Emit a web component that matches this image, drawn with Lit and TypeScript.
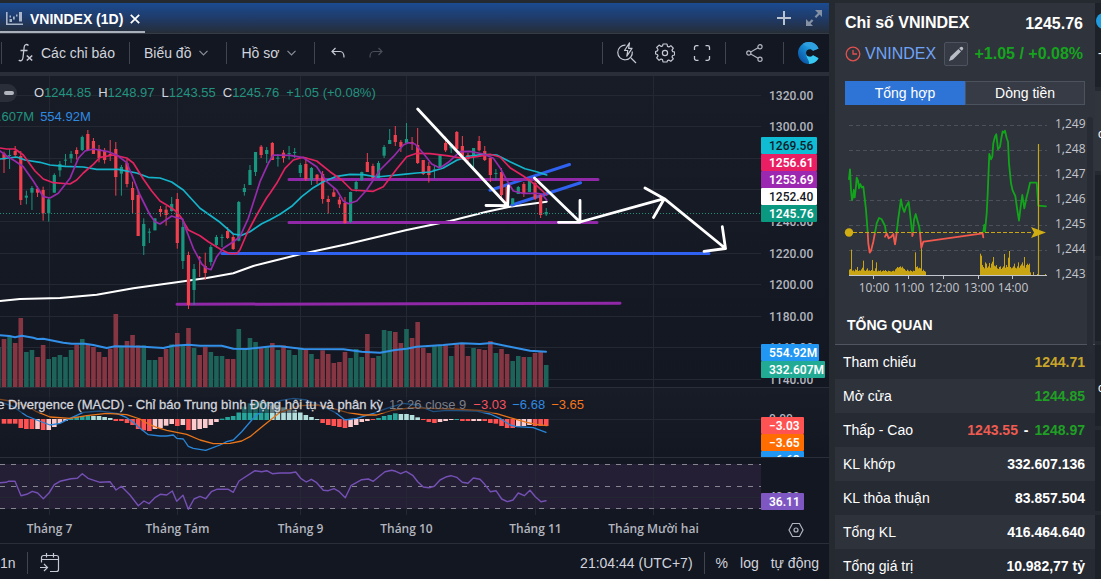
import { LitElement, html, svg, css } from "lit";
import { customElement, state } from "lit/decorators.js";

const STEP = 5.59;
const barX = (i: number) => 4 + STEP * i;

// Traces are stored at three units per pixel, relative to an origin.
type Trace = { x: number; y: number; pts: string };
const toPoints = (traces: Trace[]) =>
  traces
    .map((t) =>
      t.pts
        .split(" ")
        .map((p) => {
          const [a, b] = p.split(",").map(Number);
          return `${(t.x + a / 3).toFixed(1)},${(t.y + b / 3).toFixed(1)}`;
        })
        .join(" ")
    )
    .join(" ");
const line = (traces: Trace[], color: string, width: number) =>
  svg`<polyline points=${toPoints(traces)} fill="none" stroke=${color} stroke-width=${width} stroke-linejoin="round" stroke-linecap="round"></polyline>`;

// high, open/close top, open/close bottom, low
const CANDLES =
  "r230,235,254,294 g222,240,243,282 r213,228,240,247 r228,243,375,390 g347,362,368,388 g333,339,353,405 r333,341,353,366 r335,345,415,437 g369,373,415,440 g295,300,353,353 g258,267,286,305 g237,254,257,272 g228,237,250,264 r217,225,237,254 g182,186,225,228 r165,177,225,225 r189,198,237,237 r210,222,249,262 r219,228,255,266 r195,237,243,258 r201,222,306,362 g270,276,296,362 r252,264,327,337 r320,339,375,416 r345,360,483,483 g430,447,513,540 g460,470,473,504 g430,430,466,466 r393,402,411,425 r393,404,420,452 g366,387,408,410 r354,372,504,521 g436,456,558,582 r530,540,690,702 g567,582,645,690 r543,547,549,606 r533,573,594,615 g510,516,561,572 g480,486,510,518 g478,486,489,516 r456,468,489,492 r477,486,522,525 g378,381,497,499 g327,339,351,362 g270,285,330,330 g231,231,291,303 r210,215,240,249 g216,225,237,264 r201,204,255,255 g237,248,251,275 r225,233,249,263 g213,234,237,254 g219,231,234,249 g264,270,294,306 r246,267,312,318 g276,279,315,330 r297,299,313,327 r288,297,372,386 r362,372,381,416 r340,352,365,366 r365,374,388,399 r366,384,444,446 g350,351,441,444 g318,321,342,350 g290,291,315,318 r234,261,291,291 r266,273,309,312 g258,264,309,310 g210,216,242,249 g162,195,207,207 r153,180,201,213 r195,201,216,231 g144,192,204,204 r186,201,207,225 r159,210,264,267 r255,255,297,300 r261,273,300,323 g270,283,286,311 g237,240,276,279 r185,204,226,231 g205,207,220,234 r168,171,222,224 r183,213,243,255 r234,240,252,264 g219,219,246,282 r183,198,226,229 r213,228,255,258 r249,249,300,321 g282,294,297,315 r279,291,360,369 r331,336,390,396 g369,370,387,390 g333,336,357,357 r321,327,354,366 g312,315,351,351 r318,324,371,375 r357,360,420,429 g399,411,418,423".split(" ");

const VOLUMES =
  "g126 r102 g93 r114 r39 g141 g135 r156 r120 g162 g156 g150 g156 g135 r120 g102 r120 r126 r141 r156 r131 r27 g124 r108 r90 r121 g121 g165 g165 r156 r132 g118 r84 g121 r69 g129 r150 r126 g141 g153 g153 r162 r162 g72 g129 g99 g111 r128 g126 r114 g135 r121 g135 g150 g132 r135 g147 r162 r136 r147 r174 r171 r141 g159 g132 g156 r87 r159 g153 g75 g78 r81 r114 g72 r99 r51 r129 r144 g123 g123 r121 g153 r118 r117 r153 g129 r132 r135 r108 g144 r132 r147 g168 g153 r156 g156 r144 r141 g180".split(" ");

const HISTOGRAM =
  "R-14 R-14 R-14 R-27 R-30 R-30 P-30 R-33 P-33 P-24 P-12 P-6 G5 G10 G12 G13 L12 L12 L9 L6 R-6 R-6 R-12 R-18 R-30 R-34 R-36 P-30 P-27 P-20 P-15 R-21 P-18 R-33 P-33 P-30 P-27 P-18 P-9 G4 G9 G12 G24 G40 G50 G54 G56 G54 L50 L45 L38 L33 L30 L24 L15 L9 L3 R-12 R-18 R-21 R-24 R-27 P-24 P-18 P-9 P-6 R-3 G6 G12 G15 G20 L18 L18 L15 L8 R-3 R-9 R-12 P-9 P-6 P-3 G3 R-6 R-6 P-6 P-6 R-6 R-12 R-14 R-21 R-27 R-27 P-22 P-21 P-18 R-21 R-21 R-21".split(" ");
const HIST_COLORS: Record<string, string> = { R: "#ff5252", P: "#fccbcd", G: "#26a69a", L: "#b2dfdb" };

const MA_CYAN: Trace[] = [
  { x: 0, y: 75, pts: "0,252 50,246 75,255 120,262 150,270 195,274 250,276 290,283 355,283 410,294 445,307 480,309 515,321 550,345 600,400 660,442 700,477 725,481 750,470 785,446" },
  { x: 270, y: 75, pts: "0,434 30,418 65,394 95,365 130,338 160,320 200,304 240,298 280,299 320,306 350,303 400,298 440,294 480,291 520,279 560,256 600,243 640,238 680,240 720,260 765,281 800,290 830,300" },
];
const MA_RED: Trace[] = [
  { x: 0, y: 75, pts: "0,219 20,222 45,222 70,240 105,288 130,312 160,323 210,327 230,315 250,294 280,268 300,247 340,240 380,249 400,264 430,312 455,348 480,378 510,396 530,410 545,430 565,465 600,482 625,500 665,525 690,536 710,536 720,524 740,477 770,420 800,368" },
  { x: 270, y: 75, pts: "0,355 20,325 45,280 70,255 100,247 140,258 180,290 215,315 245,345 310,349 340,335 380,282 410,245 440,235 480,236 530,242 580,250 620,245 660,238 690,246 720,278 760,303 800,332 830,360" },
];
const MA_PURPLE: Trace[] = [
  { x: 0, y: 75, pts: "0,228 20,243 45,258 70,275 100,318 130,365 150,369 175,355 210,310 235,250 255,228 280,222 325,230 350,240 380,263 400,310 420,360 450,420 465,440 480,447 515,423 530,428 548,432 555,455 580,520 605,567 620,580 633,584 650,545 670,520 700,500 720,485 745,430 780,320 805,265" },
  { x: 270, y: 75, pts: "10,240 60,241 100,248 140,275 170,320 200,345 220,378 235,386 260,378 290,345 330,285 370,245 400,210 415,203 435,207 460,235 485,267 510,279 535,262 570,230 600,229 640,237 670,250 690,278 710,315 730,348 760,355 800,355 815,357 830,375" },
];
const MA_WHITE: Trace[] = [
  { x: 0, y: 75, pts: "0,678 60,672 180,669 290,659 400,640 530,622 620,609 700,595 760,573" },
  { x: 270, y: 75, pts: "0,560 90,538 230,508 410,465 540,438 650,410 720,395 830,380" },
];
const VOLUME_MA: Trace[] = [
  { x: 0, y: 305, pts: "0,91 28,93 45,97 65,92 100,98 112,102 130,101 190,113 215,116 255,116 280,120 320,129 345,124 430,125 490,129 520,122 565,119 600,122 665,122 700,131 740,132 815,124" },
  { x: 280, y: 305, pts: "0,124 70,132 190,133 245,140 300,143 345,135 380,131 410,125 490,120 545,115 600,117 635,114 690,125 750,137 798,140" },
];
const MACD_LINE: Trace[] = [
  { x: 0, y: 305, pts: "0,290 40,305 80,333 110,345 150,360 180,355 210,340 250,322 300,318 350,325 380,338 400,352 420,370 445,389 480,393 500,393 520,390 530,400 550,402 565,424 580,430 617,436 660,420 680,410 700,405 725,380 760,340 800,305" },
  { x: 280, y: 305, pts: "0,287 40,280 80,285 130,305 165,322 195,345 230,340 280,325 320,310 370,295 410,300 460,320 500,316 590,318 630,327 660,340 690,360 710,365 760,368 798,382" },
];
const SIGNAL_LINE: Trace[] = [
  { x: 0, y: 305, pts: "0,283 30,288 80,303 110,320 150,336 210,340 260,332 320,325 380,329 420,342 445,357 470,367 500,376 560,388 600,405 640,416 690,415 725,408 750,395 790,362 830,330" },
  { x: 280, y: 305, pts: "0,322 60,302 110,300 150,308 200,322 250,330 290,330 340,315 400,308 450,310 520,312 600,316 650,326 690,338 740,352 770,358 800,362" },
];
const RSI_LINE: Trace[] = [
  { x: 0, y: 305, pts: "0,533 18,532 25,529 45,529 63,572 80,568 97,559 113,564 130,581 147,564 163,539 180,529 213,521 232,520 247,506 264,520 300,532 330,530 348,555 364,544 390,570 415,602 432,588 447,596 466,577 481,568 500,570 517,558 530,589 549,571 565,613 582,582 600,574 617,581 634,560 650,553 685,553 700,562 717,528 765,497 785,500 800,497 817,506" },
  { x: 280, y: 305, pts: "0,504 30,504 47,501 62,520 79,531 94,523 110,533 130,556 145,557 162,551 178,560 196,578 213,542 245,524 265,522 280,529 300,512 315,500 335,496 347,499 362,506 378,499 398,511 413,530 430,546 447,548 463,544 480,525 500,515 513,512 530,517 547,532 564,535 580,519 600,523 614,538 631,560 648,557 665,582 682,590 699,585 715,564 733,572 750,556 766,575 783,590 798,587" },
];

const MONTHS = [
  { x: 49.5, label: "Tháng 7" },
  { x: 177.5, label: "Tháng Tám" },
  { x: 300.5, label: "Tháng 9" },
  { x: 406.5, label: "Tháng 10" },
  { x: 535.5, label: "Tháng 11" },
  { x: 653.5, label: "Tháng Mười hai" },
];
const PRICES = [1320, 1300, 1280, 1260, 1240, 1220, 1200, 1180, 1160, 1140];
// Levels whose labels give way entirely to the indicator tags.
const COVERED = [1280, 1260];
const priceY = (p: number) => Math.floor((1320 - p) * 1.58) + 95.5;

const verticals = (top: number, bottom: number) =>
  MONTHS.map((m) => svg`<line class="grid" x1=${m.x} x2=${m.x} y1=${top} y2=${bottom}></line>`);

const tag = (y: number, w: number, label: string, fill: string, ink = "#fff", weight = 600) => svg`
  <rect x="761" y=${y} width=${w} height="17" rx="1" fill=${fill}></rect>
  <text class="tick" x="769" y=${y + 13} style=${`fill:${ink};font-weight:${weight}`}>${label}</text>`;

@customElement("price-chart")
export class PriceChart extends LitElement {
  static styles = css`
    :host { display: block; position: relative; font-family: "Liberation Sans", Arial, sans-serif; background: #131722; }
    .pane { position: relative; border-bottom: 1px solid #2a2e39; overflow: hidden; background: linear-gradient(#181c27, #131722); }
    svg { display: block; width: 100%; }
    .time { border-bottom: 1px solid #2a2e39; background: #131722; }
    .grid { stroke: #242832; stroke-width: 1; shape-rendering: crispEdges; }
    .tick { font: 500 12px Roboto, "Open Sans", sans-serif; fill: #b2b5be; }
    .month { font: 600 12px "Open Sans", "Noto Sans", sans-serif; fill: #b2b5be; text-anchor: middle; }
    .legend { position: absolute; left: 0; top: 8px; display: flex; flex-direction: column; gap: 6px; font-size: 13px; line-height: 18px; color: #d1d4dc; }
    .row { display: flex; align-items: center; gap: 7px; white-space: nowrap; }
    .hide { width: 17px; height: 18px; margin-right: 10px; padding: 0; border: 0; border-radius: 0 9px 9px 0; background: #2a2e39; display: flex; align-items: center; justify-content: center; }
    .dash { width: 10px; height: 4px; border-radius: 2px; background: #b2b5be; }
    .up { color: #22937f; }
    .blue { color: #2f8ae0; }
    .second { gap: 6px; margin-left: -2px; }
    .macd { position: absolute; left: 0; top: 9px; display: flex; gap: 6px; font-size: 13px; line-height: 16px; white-space: nowrap; color: #d1d4dc; background: rgba(20, 24, 35, 0.5); }
    .name { width: 383px; display: flex; justify-content: flex-end; overflow: hidden; -webkit-text-stroke: 0.3px #d1d4dc; }
    .params { color: #7b7f8a; margin-right: 1px; }
    .red { color: #f7525f; }
    .orange { color: #f5761a; }
  `;

  private pane(top: number, height: number, body: unknown) {
    return html`<svg viewBox=${`0 ${top} 829 ${height}`} preserveAspectRatio="xMaxYMin meet" role="img">${body}</svg>`;
  }

  private drawPrice() {
    return svg`
      ${verticals(76, 387)}
      ${PRICES.map((p) => svg`<line class="grid" x1="0" x2="761" y1=${priceY(p)} y2=${priceY(p)}></line>
        ${COVERED.includes(p) ? "" : svg`<text class="tick" x="769" y=${priceY(p) + 4}>${p.toFixed(2)}</text>`}`)}
      ${VOLUMES.map((v, n) => {
        const top = 305 + Number(v.slice(1)) / 3;
        return svg`<rect x=${barX(n - 1) - 2.3} y=${top} width="4.6" height=${387 - top} fill=${v[0] === "g" ? "#1d6359" : "#863642"}></rect>`;
      })}
      ${line(VOLUME_MA, "#3390e8", 2)}
      ${line(MA_WHITE, "#ffffff", 2)}
      <g fill="none" stroke-width="3" stroke-linecap="round">
        <g stroke="#2f62f0"><path d="M222 253.500H709M490 190.300L569.500 164.500M512 205L580.500 182.700"></path></g>
        <g stroke="#9028a8"><path d="M289 179.500H598M289 222.500H597M177 304.300L620 303.300"></path></g>
      </g>
      ${CANDLES.map((c, i) => {
        const [h, t, b, l] = c.slice(1).split(",").map((v) => 75 + Number(v) / 3);
        const color = c[0] === "g" ? "#18967f" : "#f23f4e";
        return svg`<path d=${`M${barX(i)} ${h}V${l}`} stroke=${color} stroke-width="1"></path>
          <rect x=${barX(i) - 1.6} y=${t} width="3.2" height=${Math.max(1, b - t)} fill=${color}></rect>`;
      })}
      ${line(MA_CYAN, "#14b4cb", 1.7)}
      ${line(MA_RED, "#e2235f", 1.7)}
      ${line(MA_PURPLE, "#962bab", 1.7)}
      <path d="M0 213.500H761" stroke="#1a8f7c" stroke-width="1" stroke-dasharray="1 2"></path>
      <path d="M417.700 109L507.700 205.700M486 205.500L507.700 205.700L508.500 186M534.500 178L580 222M558.500 222.300H580V200.500M580 222L664.300 198.700M645 188L664.300 198.700L653.500 217.500M664.300 198.700L725.500 248.500M704 251.300L725.500 248.500L722.300 226.700" fill="none" stroke="#fff" stroke-width="2.800" stroke-linecap="round" stroke-linejoin="round"></path>
      ${tag(137, 56, "1269.56", "#0fbcd4", "#0c1b26", 500)}
      ${tag(154, 56, "1256.61", "#e91e63")}
      ${tag(171, 56, "1253.69", "#9c27b0")}
      ${tag(188, 56, "1252.40", "#ffffff", "#131722", 500)}
      ${tag(205, 56, "1245.76", "#0a9880")}
      ${tag(344, 58, "554.92M", "#2196f3")}
      ${tag(361, 64, "332.607M", "#22ab94")}`;
  }

  private drawMacd() {
    return svg`
      ${verticals(388, 457)}
      <line class="grid" x1="0" x2="761" y1="419.500" y2="419.500"></line>
      <text class="tick" x="769" y="423">0.00</text>
      ${HISTOGRAM.map((v, i) => {
        const size = Number(v.slice(1)) / 3;
        return svg`<rect x=${barX(i) - 2.3} y=${size > 0 ? 420 - size : 419} width="4.6" height=${Math.abs(size)} fill=${HIST_COLORS[v[0]]}></rect>`;
      })}
      ${line(MACD_LINE, "#2986da", 1.3)}
      ${line(SIGNAL_LINE, "#e87519", 1.3)}
      ${tag(417, 43, "−3.03", "#ff5252")}
      ${tag(434, 43, "−3.65", "#ff6d00")}
      ${tag(451, 43, "−6.68", "#2196f3")}`;
  }

  private drawRsi() {
    return svg`
      <rect x="0" y="464" width="761" height="45" fill="#241f35"></rect>
      ${verticals(458, 515)}
      <line class="grid" x1="0" x2="761" y1="497.500" y2="497.500"></line>
      <path d="M0 464.500H761M0 486.500H761M0 508.500H761" stroke="#85868f" stroke-width="1" stroke-dasharray="5 6" stroke-dashoffset="0"></path>
      ${line(RSI_LINE, "#7450b4", 1.4)}
      <text class="tick" x="769" y="501">40.00</text>
      ${tag(493, 43, "36.11", "#7e57c2")}`;
  }

  render() {
    return html`
      <section class="pane">
        ${this.pane(76, 311, this.drawPrice())}
        <div class="legend">
          <div class="row">
            <button class="hide" aria-label="Thu gọn"><span class="dash"></span></button>
            <span>O<span class="up">1244.85</span></span>
            <span>H<span class="up">1248.97</span></span>
            <span>L<span class="up">1243.55</span></span>
            <span>C<span class="up">1245.76</span></span>
            <span class="up">+1.05 (+0.08%)</span>
          </div>
          <div class="row second"><span class="up">.607M</span><span class="blue">554.92M</span></div>
        </div>
      </section>
      <section class="pane">
        ${this.pane(388, 69, this.drawMacd())}
        <div class="macd">
          <span class="name">e Divergence (MACD) - Chỉ báo Trung bình Động hội tụ và phân kỳ</span>
          <span class="params">12 26 close 9</span>
          <span class="red">−3.03</span><span class="blue">−6.68</span><span class="orange">−3.65</span>
        </div>
      </section>
      <section class="time">
        ${this.pane(458, 85, svg`${this.drawRsi()}
          ${MONTHS.map((m) => svg`<text class="month" x=${m.x} y="533">${m.label}</text>`)}
          <g fill="none" stroke="#b2b5be" stroke-width="1.200"><path d="M792.500 523.500h7l3.500 6.500l-3.500 6.500h-7l-3.500-6.500z"></path><circle cx="796" cy="530" r="2"></circle></g>`)}
      </section>`;
  }
}

const INTRADAY: { color: string; pts: string }[] = [
  { color: "#12a51b", pts: "57,207 60,178 63,240 66,270 69,262 71,240 74,262 78,228 80,203 84,212 87,235 91,222 95,232 100,230 104,265 108,300 111,340 113,368" },
  { color: "#f25a4e", pts: "113,368 115,400 119,428 123,422 130,395 135,368" },
  { color: "#12a51b", pts: "135,368 140,340 147,324 155,328 165,348 168,368" },
  { color: "#f25a4e", pts: "165,380 170,370 176,385 184,380 190,372 195,403 198,385 200,368" },
  { color: "#12a51b", pts: "200,365 205,325 213,268 217,290 223,306 228,290 236,276 240,310 245,355 247,368" },
  { color: "#f25a4e", pts: "247,368 247,378 249,372" },
  { color: "#12a51b", pts: "249,365 252,330 257,312 262,330 268,352 270,368" },
  { color: "#f25a4e", pts: "270,368 274,414 280,395 287,394 458,370 460,382" },
  { color: "#12a51b", pts: "460,365 463,345 465,365 470,310 473,250 478,132 483,148 487,140 490,100 495,80 499,73 504,118 510,110 514,85 518,64 522,68 525,62 530,85 534,95 537,160 543,220 548,242 556,258 562,300 567,332 572,290 577,255 583,295 590,260 594,245 600,218 620,218 625,287 648,289" },
];
const MORNING = [16, 18, 76, 13, 14, 11, 17, 15, 24, 12, 14, 13, 17, 22, 43, 14, 12, 16, 20, 13, 14, 12, 15, 45, 13, 12, 20, 38, 11, 13, 12, 14, 10, 12, 14, 12, 15, 12, 10, 13, 12, 11, 10, 12, 13, 11, 17, 20, 24, 22, 24, 26, 22, 25, 20, 18, 14, 12, 16, 13, 11, 14, 12, 10, 13, 12, 68, 24, 26, 20, 22, 20, 94, 12, 16, 12, 10];
const AFTERNOON = [64, 58, 30, 24, 20, 38, 34, 22, 26, 36, 22, 34, 40, 54, 28, 26, 30, 20, 18, 24, 26, 18, 22, 26, 63, 22, 30, 24, 52, 72, 24, 20, 22, 26, 34, 22, 20, 26, 38, 22, 28, 32, 38, 28, 54, 22, 30, 34, 30, 34, 8];

@customElement("index-panel")
export class IndexPanel extends LitElement {
  @state() private tab = 0;

  static styles = css`
    :host { display: flex; flex-direction: column; min-height: 0; overflow: hidden; background: #2f333c; color: #fff; font: 14px/20px "Liberation Sans", Arial, sans-serif; }
    .head { padding: 8px 12px 0 10px; display: flex; flex-direction: column; gap: 4px; font-size: 16px; }
    .line { display: flex; align-items: center; justify-content: space-between; line-height: 26px; }
    .line b, h2 { margin: 0; font-size: 16px; }
    h2 { line-height: 22px; margin-bottom: 2px; }
    .symbol { display: flex; align-items: center; gap: 4px; color: #6fa3f5; text-decoration: none; }
    .edit { width: 24px; height: 24px; margin-left: 4px; padding: 0; background: #353a44; border: 1px solid #4c525e; border-radius: 2px; display: grid; place-items: center; }
    .gain { color: #16a41e; white-space: nowrap; }
    .group { display: flex; align-items: center; gap: 4px; }
    .tabs { display: flex; margin: 14px 10px 0; }
    .tabs button { flex: 1; height: 24px; padding: 0; border: 1px solid #4c525e; background: #363b45; color: #fff; font: inherit; }
    .tabs button.on { background: #2e73d6; border-color: #2e73d6; }
    .scroll { flex: 1; min-height: 0; overflow: hidden; position: relative; }
    .chart { display: block; width: 100%; }
    .chart text { font: 12px "Open Sans", "Noto Sans", sans-serif; fill: #c3c6cd; }
    h3 { margin: 0; padding: 5px 12px 9px; font-size: 14px; line-height: 20px; border-bottom: 1px solid #50555f; }
    table { width: 100%; border-collapse: collapse; }
    tr { background: #262a33; }
    tr:nth-child(even) { background: #2e323b; }
    th, td { height: 34px; padding: 0 8px; box-sizing: border-box; text-align: left; font-weight: 400; white-space: nowrap; }
    td { padding: 0 10px; text-align: right; font-weight: 700; }
    .yellow { color: #c9a52a; }
    .green { color: #1fa024; }
    .red { color: #ee5b50; }
    .to { margin: 0 2px; }
    .thumb { position: absolute; right: 2px; top: 12px; width: 6px; height: 238px; border-radius: 3px; background: #272b33; }
  `;

  private drawIntraday() {
    const labels = ["1,249", "1,248", "1,247", "1,246", "1,245", "1,244", "1,243"];
    const bars = (list: number[], start: number) =>
      list.map((h, i) => svg`<rect x=${start + i} y=${275 - h / 3} width="1" height=${h / 3} fill="#c9a514"></rect>`);
    return svg`
      ${labels.map((t, i) => svg`
        ${i < 6 ? svg`<path d=${`M849 ${125.5 + 25 * i}H1047`} stroke="#4b505b" stroke-dasharray="4 3"></path>` : ""}
        <text x="1055" y=${128 + 25 * i}>${t}</text>`)}
      ${bars(MORNING, 849)}${bars(AFTERNOON, 980)}
      <path d="M1033.500 272V275M1037.500 274V275M1045.500 274V275" stroke="#c9a514"></path>
      <path d="M849 275.500H1047M873.500 275V279M908.500 275V279M943.500 275V279M978.500 275V279M1012.500 275V279" stroke="#c3c6cd" fill="none"></path>
      ${["10:00", "11:00", "12:00", "13:00", "14:00"].map((t, i) => svg`<text x=${874 + 35 * i - (i === 4 ? 1 : 0)} y="292" text-anchor="middle">${t}</text>`)}
      ${INTRADAY.map((s) => line([{ x: 830, y: 110, pts: s.pts }], s.color, 1.8))}
      <path d="M853 232.500H1032" stroke="#c9a514" stroke-dasharray="4 2"></path>
      <circle cx="849" cy="232.500" r="4.200" fill="#d1ad14"></circle>
      <path d="M1038.500 144V275" stroke="#c9a514" stroke-width="1.200"></path>
      <path d="M1031 227L1046 232.500L1031 238L1034 232.500Z" fill="#d1ad14"></path>`;
  }

  render() {
    return html`
      <header class="head">
        <div class="line"><h2>Chỉ số VNINDEX</h2><b>1245.76</b></div>
        <div class="line">
          <div class="group">
            <a class="symbol" href="#">
              <svg width="16" height="16" viewBox="0 0 16 16" fill="none" stroke="#e0524f" stroke-width="1.300"><circle cx="8" cy="8" r="6.800"></circle><path d="M8 4v4h4"></path></svg>
              VNINDEX</a>
            <button class="edit" aria-label="Sửa"><svg width="16" height="16" viewBox="0 0 16 16" fill="#b9bdc6"><path d="M1 15l1.500-4.500L10.500 3l2.500 2.500L5 13.500zM11.200 2.300l1-1a1.700 1.700 0 0 1 2.500 2.500l-1 1z"></path></svg></button>
          </div>
          <b class="gain">+1.05 / +0.08%</b>
        </div>
      </header>
      <div class="tabs" role="tablist">
        ${["Tổng hợp", "Dòng tiền"].map((t, i) => html`<button role="tab" class=${this.tab === i ? "on" : ""} @click=${() => (this.tab = i)}>${t}</button>`)}
      </div>
      <div class="scroll">
        <svg class="chart" viewBox="835 105 260 205">${this.drawIntraday()}</svg>
        <h3>TỔNG QUAN</h3>
        <table>
          <tr><th>Tham chiếu</th><td class="yellow">1244.71</td></tr>
          <tr><th>Mở cửa</th><td class="green">1244.85</td></tr>
          <tr><th>Thấp - Cao</th><td><span class="red">1243.55</span><span class="to"> - </span><span class="green">1248.97</span></td></tr>
          <tr><th>KL khớp</th><td>332.607.136</td></tr>
          <tr><th>KL thỏa thuận</th><td>83.857.504</td></tr>
          <tr><th>Tổng KL</th><td>416.464.640</td></tr>
          <tr><th>Tổng giá trị</th><td>10.982,77 tỷ</td></tr>
        </table>
        <div class="thumb"></div>
      </div>`;
  }
}

const chevron = html`<svg width="9" height="6" viewBox="0 0 9 6" fill="none" stroke="#8a8e99" stroke-width="1.200"><path d="M.5 .8l4 4l4-4"></path></svg>`;

@customElement("app-root")
export class AppRoot extends LitElement {
  static styles = css`
    :host { display: grid; grid-template-columns: minmax(0, 1fr) 260px 6px; height: 100vh; box-sizing: border-box; padding-top: 3px; overflow: hidden; background: #252930; color: #d1d4dc; font: 14px/20px "Liberation Sans", Arial, sans-serif; }
    button { background: none; border: 0; padding: 0; color: inherit; font: inherit; display: flex; align-items: center; white-space: nowrap; }
    svg { display: block; flex: none; }
    main { margin-right: 6px; min-width: 0; overflow: hidden; background: #131722; }
    .tabbar { height: 30px; display: flex; justify-content: space-between; background: linear-gradient(#1b4b91, #1f3b69 50%, #262d38); border-bottom: 1px solid #363a42; }
    .tab { height: 25px; padding: 3px 5px 0 6px; display: flex; align-items: center; gap: 7px; color: #fff; font-weight: 700; border-bottom: 2px solid #a9b0bc; box-sizing: content-box; }
    .actions { display: flex; align-items: center; gap: 15px; padding-right: 7px; }
    .toolbar { height: 38px; display: flex; align-items: center; justify-content: space-between; border-bottom: 4px solid #2a2e39; }
    .tools { display: flex; align-items: center; gap: 14px; padding: 0 10px 0 1px; }
    .sep { width: 1px; height: 22px; background: #40444f; }
    .fx { gap: 7px; margin-left: 1px; }
    .drop { gap: 8px; margin-right: 4px; }
    .undo { margin: 0 10px 0 2px; }
    .right { gap: 20px; }
    .tight { gap: 14px; display: flex; align-items: center; }
    .spread { gap: 18px; display: flex; align-items: center; }
    .bottom { height: 36px; display: flex; align-items: center; justify-content: space-between; padding-top: 1px; }
    .range { display: flex; align-items: center; gap: 11px; }
    .clock { display: flex; align-items: center; gap: 11px; padding-right: 10px; }
    .scale { margin-left: 1px; }
    aside { display: grid; grid-template-rows: 84px 80px; grid-auto-rows: 81px; row-gap: 4px; overflow: hidden; font-size: 12px; color: #fff; }
    .card { overflow: hidden; background: #1d2128; display: flex; flex-direction: column; }
    .card.light { background: #30343d; }
    .dot { width: 16px; height: 16px; margin: 10px 0 0 1px; border-radius: 8px; background: #1f9be0; flex: none; }
    .clip { padding: 14px 0 0 3px; }
    .clip.mid { padding-top: 33px; }
  `;

  render() {
    return html`
      <main>
        <nav class="tabbar">
          <div class="tab">
            <svg width="17" height="13" viewBox="0 0 17 13" fill="#a9b5c8"><path d="M0 0h1.600v11.400h15.400v1.600H0zM3.500 7h2.500v3H3.500zM3.500 3.500h1.500v2H3.500zM7 4.500h1.800v3H7zM10 2.500h1.500v2H10zM13 0h3v9.500h-3z"></path></svg>
            <span>VNINDEX (1D)</span>
            <button aria-label="Đóng"><svg width="10" height="10" viewBox="0 0 10 10" stroke="#fff" stroke-width="1.700"><path d="M.8 .8l8.400 8.400M9.200 .8L.8 9.200"></path></svg></button>
          </div>
          <div class="actions">
            <button aria-label="Thêm"><svg width="14" height="14" viewBox="0 0 14 14" stroke="#b9c2d0" stroke-width="2"><path d="M7 0v14M0 7h14"></path></svg></button>
            <button aria-label="Mở rộng"><svg width="16" height="16" viewBox="0 0 16 16" fill="#8490a4"><path d="M9 0h7v7l-2.400-2.400l-3.400 3.400l-1.600-1.600l3.400-3.400zM0 9v7h7l-2.400-2.400l2.800-2.800l-1.600-1.600l-2.800 2.800z"></path></svg></button>
          </div>
        </nav>
        <div class="toolbar">
          <div class="tools">
            <span class="sep"></span>
            <button class="fx"><svg width="17" height="20" viewBox="0 0 17 20" fill="none" stroke="#c6c9d1" stroke-width="1.300"><path d="M11.500 2.500C10 .8 7.500 1.200 7.200 4L6 14.500C5.700 18 3 18.300 1.800 17M3.500 7.500h7"></path><path d="M9.800 12.500l5.400 5M15.200 12.500l-5.400 5" stroke-width="1.600"></path></svg>Các chỉ báo</button>
            <span class="sep"></span>
            <button class="drop">Biểu đồ ${chevron}</button>
            <span class="sep"></span>
            <button class="drop">Hồ sơ ${chevron}</button>
            <span class="sep"></span>
            <button class="undo" aria-label="Hoàn tác"><svg width="14" height="12" viewBox="0 0 14 12" fill="none" stroke="#c6c9d1" stroke-width="1.200"><path d="M4.500 1L1 4.500L4.500 8M1 4.500h8c3 0 4 2 4 6"></path></svg></button>
            <button aria-label="Làm lại"><svg width="14" height="12" viewBox="0 0 14 12" fill="none" stroke="#4a4e59" stroke-width="1.200"><path d="M9.500 1L13 4.500L9.500 8M13 4.500H5c-3 0-4 2-4 6"></path></svg></button>
          </div>
          <div class="tools right">
            <div class="tight">
              <span class="sep"></span>
              <div class="spread">
                <button aria-label="Tìm kiếm nhanh"><svg width="20" height="22" viewBox="0 0 20 22" fill="none" stroke="#c6c9d1" stroke-width="1.200"><path d="M8.500 3.200A7.300 7.300 0 1 0 15.300 9.500M14 16l5 5"></path><path d="M12.500 .8L7.500 8.500h3.300l-1 5.700L15 6.300h-3.400z" stroke-linejoin="round"></path></svg></button>
                <button aria-label="Cài đặt"><svg width="20" height="20" viewBox="0 0 20 20" fill="none" stroke="#c6c9d1" stroke-width="1.200"><path d="M8 1h4l.5 2.400l1.400.6l2-1.300l2.400 2.500l-1.300 2l.6 1.400l2 .4v3l-2 .5l-.6 1.400l1.300 2l-2.500 2.400l-2-1.300l-1.300.6L12 19H8l-.5-2.400l-1.400-.6l-2 1.300l-2.400-2.500l1.300-2l-.6-1.300L.6 11V8.500l1.900-.6L3 6.500l-1.300-2l2.400-2.400L6.200 3.500l1.400-.6z" stroke-linejoin="round"></path><circle cx="10" cy="10" r="2.600"></circle></svg></button>
                <button aria-label="Toàn màn hình"><svg width="18" height="16" viewBox="0 0 18 16" fill="none" stroke="#c6c9d1" stroke-width="1.300"><path d="M1.500 5V2.500a1.800 1.800 0 0 1 1.800-1.800H5.500M12.500 .7h2.200a1.800 1.800 0 0 1 1.800 1.800V5M16.500 11v2.500a1.800 1.800 0 0 1-1.800 1.800H12.500M5.500 15.300H3.300a1.800 1.800 0 0 1-1.800-1.800V11"></path></svg></button>
              </div>
              <span class="sep"></span>
            </div>
            <button aria-label="Chia sẻ"><svg width="17" height="18" viewBox="0 0 17 18" fill="none" stroke="#b2b5be" stroke-width="1.200"><circle cx="2.800" cy="9" r="2.100"></circle><circle cx="14" cy="2.800" r="2.100"></circle><circle cx="14" cy="15.200" r="2.100"></circle><path d="M4.700 8l7.400-4.200M4.700 10l7.400 4.200"></path></svg></button>
            <div class="tight">
              <span class="sep"></span>
              <svg width="21" height="22" viewBox="0 0 21 22"><defs><linearGradient id="c" x1="0" y1="1" x2="1" y2="0"><stop offset="0" stop-color="#0b3f8f"></stop><stop offset=".5" stop-color="#1586d0"></stop><stop offset="1" stop-color="#3fd0f2"></stop></linearGradient></defs><path d="M20.500 6.500L15 8.800C13 6 8 6.800 8 11S13 16 15 13.200L20.500 16.300C18.500 20 15 22 11 22A11 11 0 0 1 11 0C15 0 18.800 2.500 20.500 6.500z" fill="url(#c)"></path><path d="M5 1.800C9 6 14 4 15 8.800L20.500 6.500C18.500 2 15 0 11 0C8.500 0 6.500 .8 5 1.800z" fill="#2f9fe0"></path><path d="M8 11c0 3 4 5.500 7 2.200l5.500 3.100c-2 3.700-6 5.700-9.500 5.700C12 19 8 16 8 11z" fill="#39c8ef"></path></svg>
            </div>
          </div>
        </div>
        <price-chart></price-chart>
        <footer class="bottom">
          <div class="range">
            <button>1n</button><span class="sep"></span>
            <button aria-label="Đi đến ngày"><svg width="21" height="20" viewBox="0 0 21 20" fill="none" stroke="#c6c9d1" stroke-width="1.200"><path d="M2.500 9.500V4.500a2 2 0 0 1 2-2h13a2 2 0 0 1 2 2v12a2 2 0 0 1-2 2H11M2.500 6.500h17M7.500 0v4.500M14.500 0v4.500M1 14.500h7M5 11l3.500 3.500L5 18"></path></svg></button>
          </div>
          <div class="clock">
            <button>21:04:44 (UTC+7)</button><span class="sep"></span>
            <button>%</button><button class="scale">log</button><button class="scale">tự động</button>
          </div>
        </footer>
      </main>
      <index-panel></index-panel>
      <aside>
        <div class="card"><span class="dot"></span><span class="clip">-</span></div>
        <div class="card light"><span class="clip mid">c</span></div>
        <div class="card"></div><div class="card"></div>
        <div class="card"><span class="clip mid">c</span></div>
        <div class="card"></div><div class="card"></div>
      </aside>`;
  }
}
